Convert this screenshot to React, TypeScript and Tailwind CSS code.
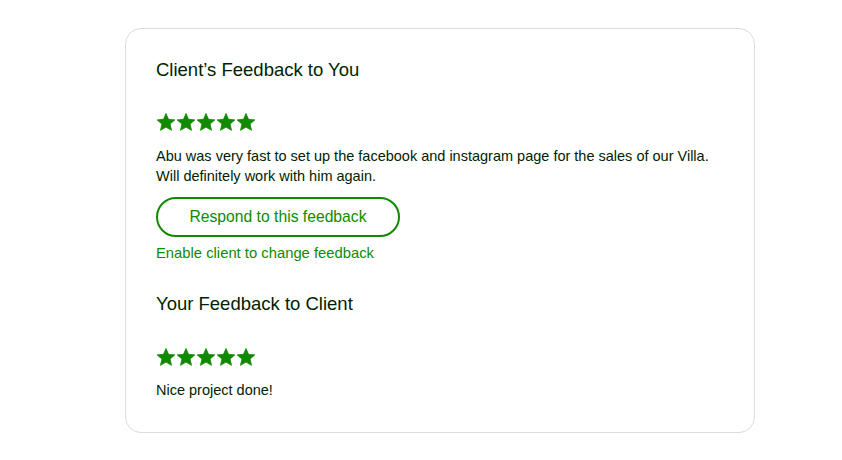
import React from "react";

const Star = () => (
  <svg width="20" height="20" viewBox="0 0 24 24" className="fill-[#108a00]">
    <path
      d="M12 1.8l3 7 7.6.7-5.7 5 1.7 7.5L12 18.1 5.4 22l1.7-7.5-5.7-5 7.6-.7z"
      strokeLinejoin="round"
      className="stroke-[#108a00]"
      strokeWidth="1"
    />
  </svg>
);

const Stars = () => (
  <div className="flex">
    {[0, 1, 2, 3, 4].map((i) => (
      <Star key={i} />
    ))}
  </div>
);

const FeedbackCard = () => {
  return (
    <div className="ml-[125px] w-[630px] rounded-2xl border border-[#dcdcdc] bg-white px-[30px] pt-[29px] pb-[32px] text-[#001e00]">
      <h2 className="text-[18.5px] leading-6">Client’s Feedback to You</h2>
      <div className="mt-[30px]">
        <Stars />
      </div>
      <p className="mt-[14px] text-[14.5px] leading-5">
        Abu was very fast to set up the facebook and instagram page for the sales of our Villa.
        <br />
        Will definitely work with him again.
      </p>
      <button className="mt-[11px] flex h-10 w-[244px] items-center justify-center rounded-full border-2 border-[#108a00] text-[15.7px] font-medium text-[#108a00]">
        Respond to this feedback
      </button>
      <div className="mt-[6px] text-[14.8px] leading-5 font-medium text-[#108a00]">
        Enable client to change feedback
      </div>

      <h2 className="mt-[29px] text-[18.5px] leading-6">Your Feedback to Client</h2>
      <div className="mt-[31px]">
        <Stars />
      </div>
      <p className="mt-[13px] text-[14.5px] leading-5">Nice project done!</p>
    </div>
  );
};

export default function App() {
  return (
    <div className="bg-white pt-[28px]" style={{ fontFamily: '"Liberation Sans", Arial, sans-serif' }}>
      <FeedbackCard />
    </div>
  );
}
